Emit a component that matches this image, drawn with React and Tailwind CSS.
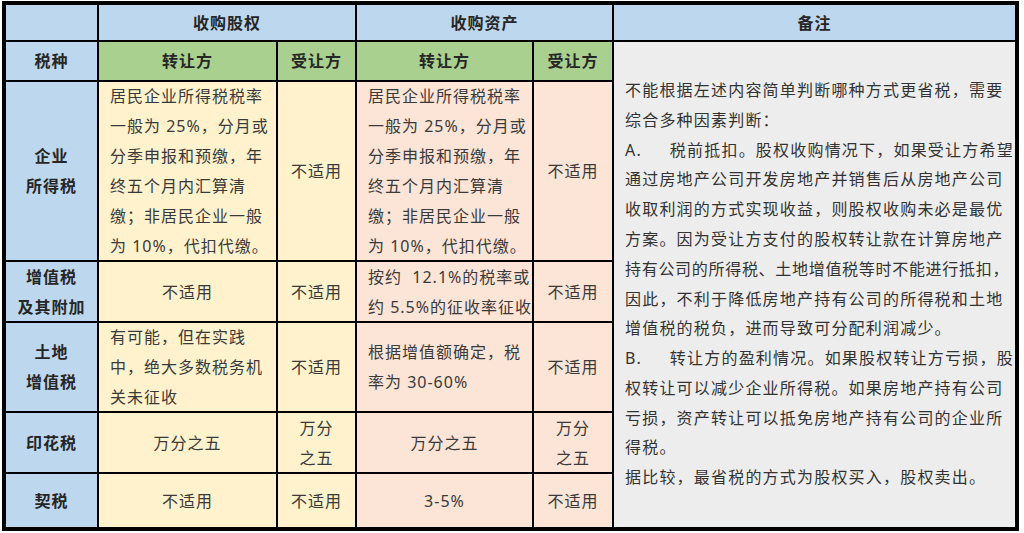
import React from "react";

const blue = "bg-[#bdd7ee]";
const green = "bg-[#a9d08e]";
const yellow = "bg-[#fff2cc]";
const pink = "bg-[#fce4d6]";

function Cell({ className = "", lines, left, bold }) {
  return (
    <div
      className={`flex flex-col justify-center ${left ? "items-start px-[11px]" : "items-center"} ${
        bold ? "font-semibold text-[#262626]" : "text-[#3a3a3a]"
      } ${className}`}
    >
      {lines.map((l, i) => (
        <div key={i} className="whitespace-pre leading-[30px]">
          {l}
        </div>
      ))}
    </div>
  );
}

const remark = [
  "不能根据左述内容简单判断哪种方式更省税，需要",
  "综合多种因素判断：",
  "A.　  税前抵扣。股权收购情况下，如果受让方希望",
  "通过房地产公司开发房地产并销售后从房地产公司",
  "收取利润的方式实现收益，则股权收购未必是最优",
  "方案。因为受让方支付的股权转让款在计算房地产",
  "持有公司的所得税、土地增值税等时不能进行抵扣，",
  "因此，不利于降低房地产持有公司的所得税和土地",
  "增值税的税负，进而导致可分配利润减少。",
  "B.　  转让方的盈利情况。如果股权转让方亏损，股",
  "权转让可以减少企业所得税。如果房地产持有公司",
  "亏损，资产转让可以抵免房地产持有公司的企业所",
  "得税。",
  "据比较，最省税的方式为股权买入，股权卖出。",
];

const incomeTax = [
  "居民企业所得税税率",
  "一般为 25%，分月或",
  "分季申报和预缴，年",
  "终五个月内汇算清",
  "缴；非居民企业一般",
  "为 10%，代扣代缴。",
];

export default function App() {
  return (
    <div className="w-[1024px] h-[533px] bg-white pt-[1px] pl-[2px] font-['Noto_Sans','Noto_Sans_CJK_SC',sans-serif] text-[16px] tracking-[1px]">
      <div className="w-[1017px] h-[530px] border-4 border-black bg-black grid gap-[2px] grid-cols-[91px_177px_77px_175px_78px_minmax(0,1fr)] grid-rows-[35px_38px_178px_59px_88px_59px_minmax(0,1fr)] overflow-hidden">
        {/* header row 1 */}
        <div className={blue} />
        <Cell className={`${blue} col-span-2`} lines={["收购股权"]} bold />
        <Cell className={`${blue} col-span-2`} lines={["收购资产"]} bold />
        <Cell className={blue} lines={["备注"]} bold />

        {/* header row 2 */}
        <Cell className={blue} lines={["税种"]} bold />
        <Cell className={green} lines={["转让方"]} bold />
        <Cell className={green} lines={["受让方"]} bold />
        <Cell className={green} lines={["转让方"]} bold />
        <Cell className={green} lines={["受让方"]} bold />
        <div className="row-span-6 min-w-0 bg-[#ededed] flex flex-col justify-center pl-[11px] text-[#333] tracking-[1.2px]">
          {remark.map((l, i) => (
            <div key={i} className={`whitespace-pre leading-[29.8px] ${i === 6 ? "tracking-[0.7px]" : ""}`}>
              {l}
            </div>
          ))}
        </div>

        {/* 企业所得税 */}
        <Cell className={blue} lines={["企业", "所得税"]} bold />
        <Cell className={yellow} lines={incomeTax} left />
        <Cell className={yellow} lines={["不适用"]} />
        <Cell className={pink} lines={incomeTax} left />
        <Cell className={pink} lines={["不适用"]} />

        {/* 增值税 */}
        <Cell className={blue} lines={["增值税", "及其附加"]} bold />
        <Cell className={yellow} lines={["不适用"]} />
        <Cell className={yellow} lines={["不适用"]} />
        <Cell className={pink} lines={["按约  12.1%的税率或", "约 5.5%的征收率征收"]} left />
        <Cell className={pink} lines={["不适用"]} />

        {/* 土地增值税 */}
        <Cell className={blue} lines={["土地", "增值税"]} bold />
        <Cell className={yellow} lines={["有可能，但在实践", "中，绝大多数税务机", "关未征收"]} left />
        <Cell className={yellow} lines={["不适用"]} />
        <Cell className={pink} lines={["根据增值额确定，税", "率为 30-60%"]} left />
        <Cell className={pink} lines={["不适用"]} />

        {/* 印花税 */}
        <Cell className={blue} lines={["印花税"]} bold />
        <Cell className={yellow} lines={["万分之五"]} />
        <Cell className={yellow} lines={["万分", "之五"]} />
        <Cell className={pink} lines={["万分之五"]} />
        <Cell className={pink} lines={["万分", "之五"]} />

        {/* 契税 */}
        <Cell className={blue} lines={["契税"]} bold />
        <Cell className={yellow} lines={["不适用"]} />
        <Cell className={yellow} lines={["不适用"]} />
        <Cell className={pink} lines={["3-5%"]} />
        <Cell className={pink} lines={["不适用"]} />
      </div>
    </div>
  );
}
